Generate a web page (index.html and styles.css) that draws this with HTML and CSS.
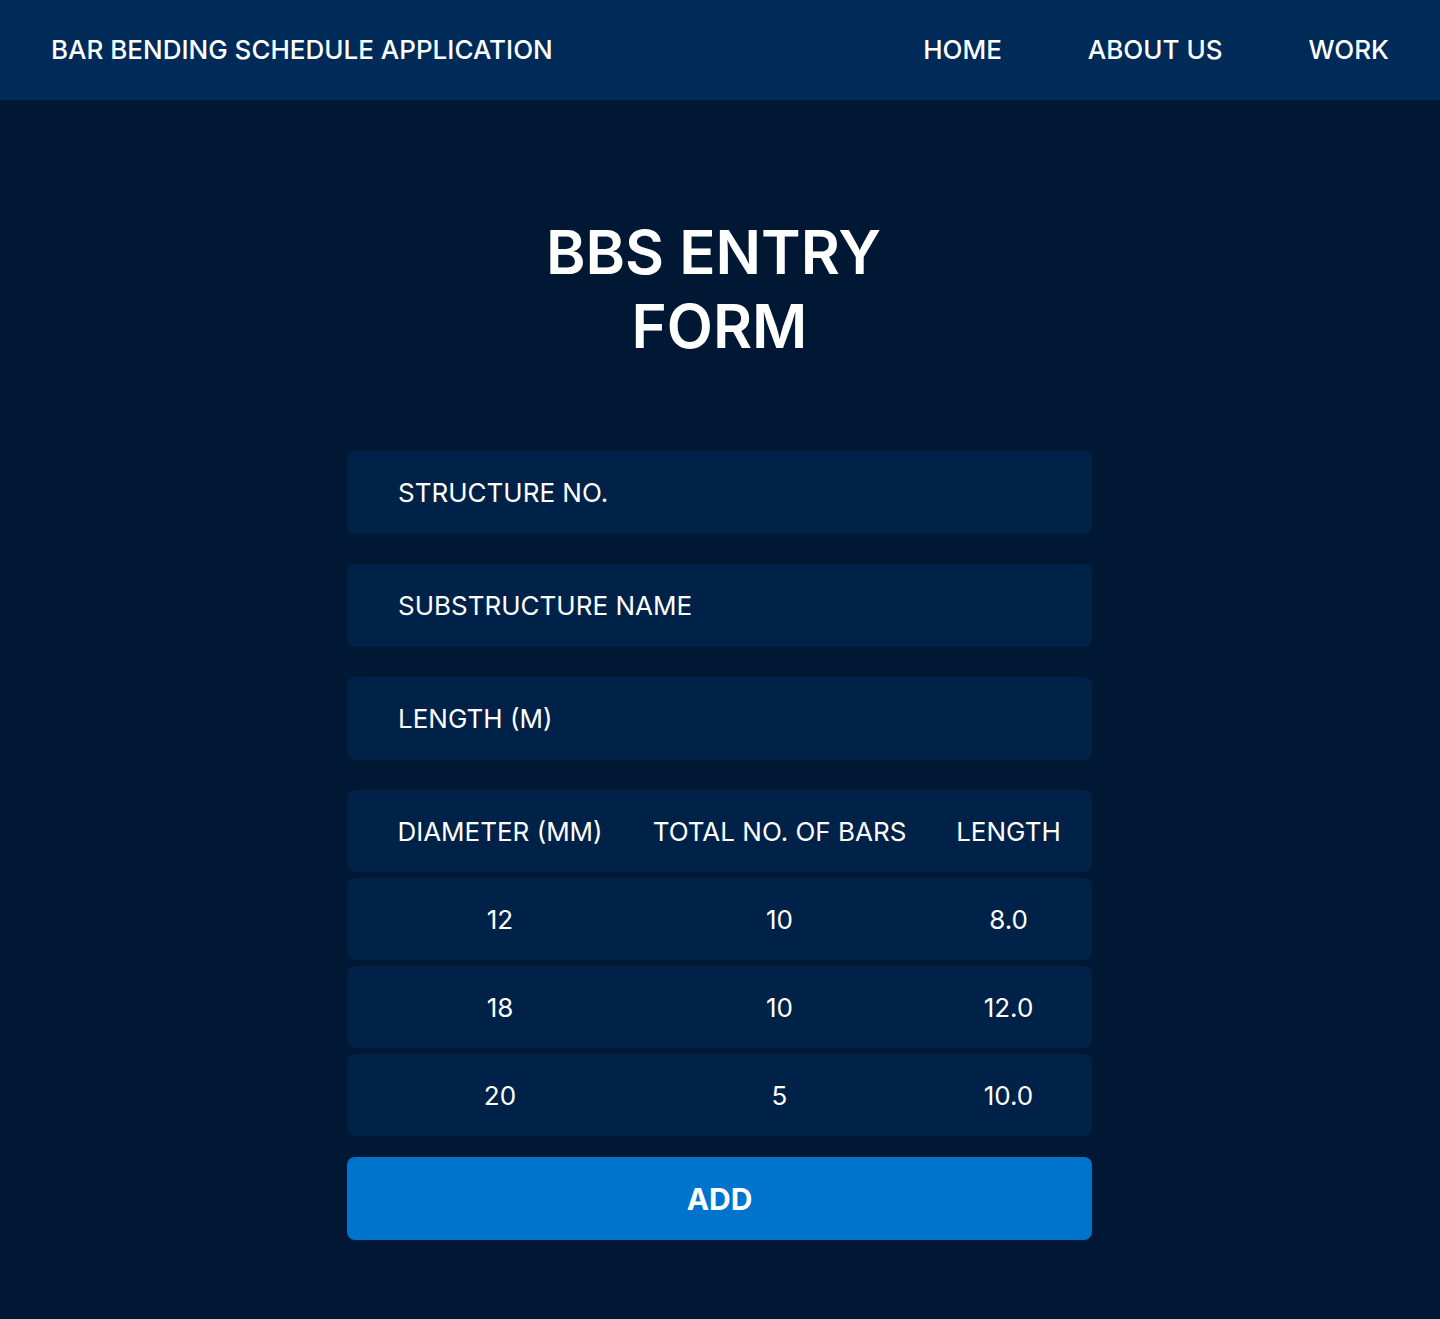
FILE: index.html
```html
<!DOCTYPE html>
<html lang="en">
<head>
<meta charset="utf-8">
<title>BBS Entry Form</title>
<link rel="stylesheet" href="styles.css">
</head>
<body>
<header class="topbar">
  <div class="brand">BAR BENDING SCHEDULE APPLICATION</div>
  <nav class="nav">
    <a class="nav-link" href="#">HOME</a>
    <a class="nav-link" href="#">ABOUT US</a>
    <a class="nav-link" href="#">WORK</a>
  </nav>
</header>
<main class="main">
  <h1 class="title">BBS ENTRY FORM</h1>
  <form class="form">
    <div class="field">STRUCTURE NO.</div>
    <div class="field">SUBSTRUCTURE NAME</div>
    <div class="field">LENGTH (M)</div>
    <div class="table">
      <div class="row head">
        <div class="cell">DIAMETER (MM)</div>
        <div class="cell">TOTAL NO. OF BARS</div>
        <div class="cell">LENGTH</div>
      </div>
      <div class="row">
        <div class="cell">12</div>
        <div class="cell">10</div>
        <div class="cell">8.0</div>
      </div>
      <div class="row">
        <div class="cell">18</div>
        <div class="cell">10</div>
        <div class="cell">12.0</div>
      </div>
      <div class="row">
        <div class="cell">20</div>
        <div class="cell">5</div>
        <div class="cell">10.0</div>
      </div>
    </div>
    <button class="add" type="button">ADD</button>
  </form>
</main>
</body>
</html>
```
FILE: styles.css
```css
* { box-sizing: border-box; }
html, body { margin: 0; padding: 0; }
body {
  background: #001833;
  color: #ffffff;
  font-family: Inter, "Noto Sans", sans-serif;
  min-height: 1319px;
}
.topbar {
  height: 100px;
  background: #002b58;
  display: flex;
  align-items: center;
  justify-content: space-between;
  padding: 0 51px 2px 51px;
}
.brand {
  font-size: 26px;
  font-weight: 500;
}
.nav {
  display: flex;
  gap: 86px;
}
.nav-link {
  color: #ffffff;
  text-decoration: none;
  font-size: 26px;
  font-weight: 500;
}
.main {
  display: flex;
  flex-direction: column;
  align-items: center;
  padding-top: 115px;
  padding-right: 1px;
}
.title {
  margin: 0;
  width: 360px;
  text-align: center;
  text-indent: -12px;
  font-size: 60px;
  font-weight: 600;
  line-height: 74px;
}
.form {
  width: 745px;
  margin-top: 88px;
  display: flex;
  flex-direction: column;
}
.field {
  height: 83px;
  background: #002248;
  border-radius: 8px;
  display: flex;
  align-items: center;
  padding-left: 51px;
  font-size: 26px;
  margin-bottom: 30px;
}
.table {
  display: flex;
  flex-direction: column;
  gap: 6px;
}
.row {
  height: 82px;
  background: #002248;
  border-radius: 8px;
  display: grid;
  grid-template-columns: 256px 303px 155px;
  align-items: center;
  padding-left: 25px;
  font-size: 26px;
}
.cell {
  text-align: center;
  white-space: nowrap;
}
.add {
  margin-top: 21px;
  height: 83px;
  border: none;
  border-radius: 8px;
  background: #0074cc;
  color: #ffffff;
  font-family: Inter, "Noto Sans", sans-serif;
  font-size: 30px;
  font-weight: 700;
}
```
